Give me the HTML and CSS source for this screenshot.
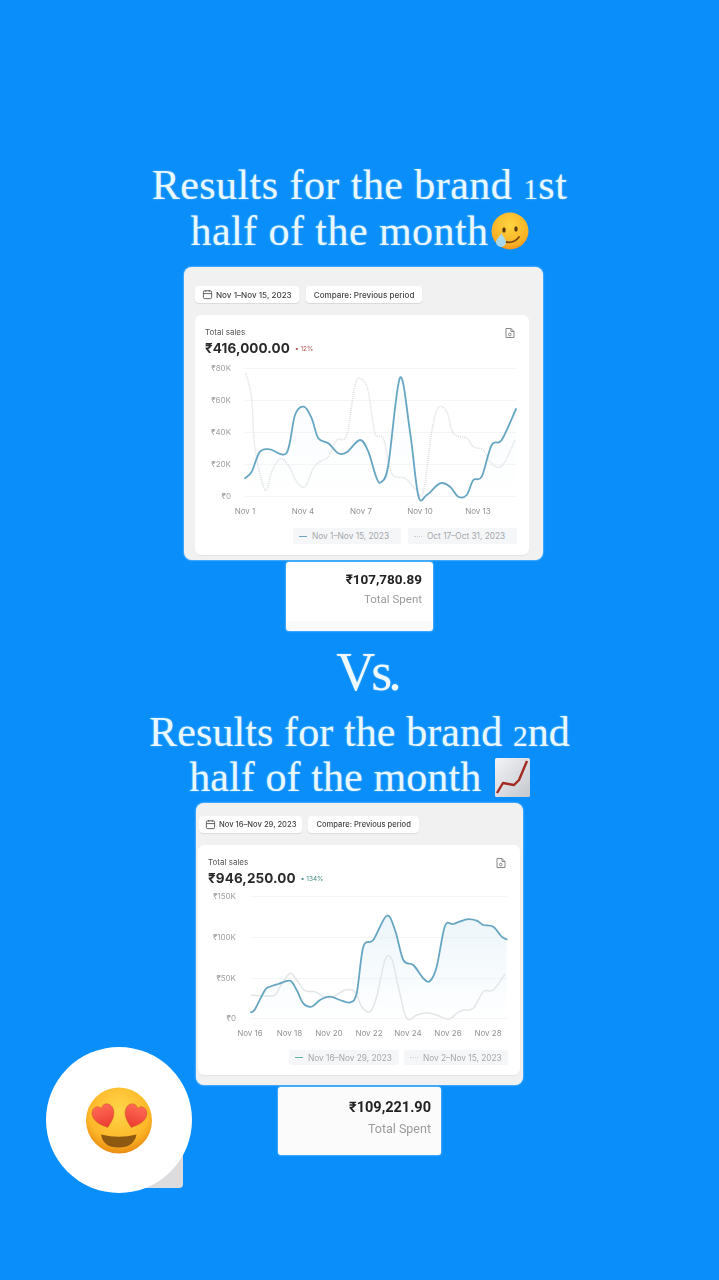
FILE: index.html
```html
<!DOCTYPE html>
<html lang="en">
<head>
<meta charset="utf-8">
<title>Results for the brand</title>
<link rel="stylesheet" href="styles.css">
</head>
<body>
<main class="story">
  <h1 class="headline headline-first">Results for the brand <span class="oldnum">1</span>st<br>half of the month<svg class="inline-emoji tear-emoji" viewBox="0 0 38 38"><defs><radialGradient id="faceA" cx="50%" cy="35%" r="70%"><stop offset="0" stop-color="#ffd540"/><stop offset=".75" stop-color="#fbb024"/><stop offset="1" stop-color="#ee8a14"/></radialGradient></defs><circle cx="19" cy="19" r="18.500" fill="url(#faceA)"/><ellipse cx="13" cy="18" rx="1.700" ry="2.800" fill="#5a3612"/><ellipse cx="25" cy="17" rx="1.700" ry="2.800" fill="#5a3612"/><path d="M15 30c5 1 10-1 13-5" fill="none" stroke="#7a4a14" stroke-width="1.800" stroke-linecap="round"/><path d="M10.500 21c1.500 4 4.500 6.500 4.500 9a5 5 0 0 1-10 0c0-2.500 3.500-5 5.500-9z" fill="#a8d8ec"/></svg></h1>

  <section class="card card-first">
    <div class="pills">
      <span class="pill pill-date"><svg class="cal" viewBox="0 0 12 12"><rect x="1.500" y="2" width="9" height="8.500" rx="1.500"/><path d="M1.500 5h9M4 1v2M8 1v2"/></svg>Nov 1–Nov 15, 2023</span>
      <span class="pill">Compare: Previous period</span>
    </div>
    <div class="panel">
      <div class="panel-head">
        <div>
          <div class="metric-label">Total sales</div>
          <div class="metric-row"><span class="metric-value">₹416,000.00</span><span class="delta delta-down">▪ 12%</span></div>
        </div>
        <svg class="doc" viewBox="0 0 10 12"><path d="M1 1.500h5l3 3v6H1z"/><path d="M6 1.500v3h3"/><circle cx="4.800" cy="7.500" r="1.300"/></svg>
      </div>
      <svg class="chart chart-first" viewBox="195 360 334 160">
        <defs><linearGradient id="areaA" x1="0" y1="0" x2="0" y2="1"><stop offset="0" stop-color="#e3eff5" stop-opacity=".25"/><stop offset="1" stop-color="#e3eff5" stop-opacity="0"/></linearGradient></defs>
        <g class="grid"><path d="M245 368.500H517M245 400.500H517M245 432.500H517M245 464.500H517M245 496.500H517"/></g>
        <g class="y-axis">
          <text x="231" y="371">₹80K</text><text x="231" y="403">₹60K</text><text x="231" y="435">₹40K</text><text x="231" y="467">₹20K</text><text x="231" y="499">₹0</text>
        </g>
        <g class="x-axis">
          <text x="245" y="514">Nov 1</text><text x="303" y="514">Nov 4</text><text x="361" y="514">Nov 7</text><text x="420" y="514">Nov 10</text><text x="478" y="514">Nov 13</text>
        </g>
        <path class="area" fill="url(#areaA)" data-base="496" data-ox="180" data-oy="265" data-points="195,640 215,620 240,560 270,553 320,563 345,450 372,425 395,460 415,520 445,535 475,565 500,562 540,525 565,560 590,640 605,650 625,600 660,338 690,500 715,692 740,690 780,655 810,665 835,695 860,690 880,645 905,635 935,540 965,525 1008,432"/>
        <path class="line-prev line-dotted" data-ox="180" data-oy="265" data-points="197,322 215,400 225,550 255,675 275,620 300,582 325,600 350,650 375,665 400,610 420,590 445,575 470,525 500,510 525,360 545,343 565,380 585,505 610,520 635,625 675,640 705,670 730,680 755,500 775,428 800,440 820,505 860,520 880,545 910,555 930,590 955,607 975,590 1005,525"/>
        <path class="line-now" data-ox="180" data-oy="265" data-points="195,640 215,620 240,560 270,553 320,563 345,450 372,425 395,460 415,520 445,535 475,565 500,562 540,525 565,560 590,640 605,650 625,600 660,338 690,500 715,692 740,690 780,655 810,665 835,695 860,690 880,645 905,635 935,540 965,525 1008,432"/>
      </svg>
      <div class="legend">
        <span class="chip chip-a"><i class="swatch"></i>Nov 1–Nov 15, 2023</span>
        <span class="chip chip-b"><i class="swatch swatch-prev"></i>Oct 17–Oct 31, 2023</span>
      </div>
    </div>
  </section>

  <section class="spent spent-first">
    <div class="spent-value">₹107,780.89</div>
    <div class="spent-label">Total Spent</div>
  </section>

  <div class="versus">Vs.</div>

  <h1 class="headline headline-second">Results for the brand <span class="oldnum">2</span>nd<br>half of the month <svg class="inline-emoji chart-emoji" viewBox="0 0 35 39"><defs><linearGradient id="tile" x1="0" y1="0" x2="1" y2="1"><stop offset="0" stop-color="#f2f3f6"/><stop offset="1" stop-color="#c4c8ce"/></linearGradient></defs><rect width="35" height="39" rx="1.500" fill="url(#tile)"/><path d="M2 35l6-10 11 2 5-5 8-19" fill="none" stroke="#a32a20" stroke-width="2.400" stroke-linejoin="round"/></svg></h1>

  <section class="card card-second">
    <div class="pills">
      <span class="pill pill-date"><svg class="cal" viewBox="0 0 12 12"><rect x="1.500" y="2" width="9" height="8.500" rx="1.500"/><path d="M1.500 5h9M4 1v2M8 1v2"/></svg>Nov 16–Nov 29, 2023</span>
      <span class="pill">Compare: Previous period</span>
    </div>
    <div class="panel">
      <div class="panel-head">
        <div>
          <div class="metric-label">Total sales</div>
          <div class="metric-row"><span class="metric-value">₹946,250.00</span><span class="delta delta-up">▪ 134%</span></div>
        </div>
        <svg class="doc" viewBox="0 0 10 12"><path d="M1 1.500h5l3 3v6H1z"/><path d="M6 1.500v3h3"/><circle cx="4.800" cy="7.500" r="1.300"/></svg>
      </div>
      <svg class="chart chart-second" viewBox="198 888 322 154">
        <defs><linearGradient id="areaB" x1="0" y1="0" x2="0" y2="1"><stop offset="0" stop-color="#d5e9f4" stop-opacity=".45"/><stop offset="1" stop-color="#d5e9f4" stop-opacity="0"/></linearGradient></defs>
        <g class="grid"><path d="M250 896.500H507M250 937.500H507M250 978.500H507M250 1018.500H507"/></g>
        <g class="y-axis">
          <text x="236" y="899">₹150K</text><text x="236" y="940">₹100K</text><text x="236" y="981">₹50K</text><text x="236" y="1021">₹0</text>
        </g>
        <g class="x-axis">
          <text x="250" y="1036">Nov 16</text><text x="289.500" y="1036">Nov 18</text><text x="329" y="1036">Nov 20</text><text x="369" y="1036">Nov 22</text><text x="408" y="1036">Nov 24</text><text x="448" y="1036">Nov 26</text><text x="488" y="1036">Nov 28</text>
        </g>
        <path class="area" fill="url(#areaB)" data-base="1018" data-ox="190" data-oy="800" data-points="183,637 195,628 225,570 240,560 265,552 300,542 320,570 340,610 365,620 390,600 420,590 450,600 480,607 500,580 520,440 550,420 590,347 615,390 640,480 670,495 700,535 720,543 740,500 765,378 790,372 830,358 860,362 880,375 910,380 935,410 950,418"/>
        <path class="line-prev" data-ox="190" data-oy="800" data-points="183,585 250,587 270,560 300,520 320,540 345,572 375,575 400,590 430,590 465,570 495,575 515,620 540,635 560,590 585,480 605,477 625,560 650,655 680,645 710,638 740,645 775,658 800,640 820,630 850,625 880,575 910,570 945,522"/>
        <path class="line-now" data-ox="190" data-oy="800" data-points="183,637 195,628 225,570 240,560 265,552 300,542 320,570 340,610 365,620 390,600 420,590 450,600 480,607 500,580 520,440 550,420 590,347 615,390 640,480 670,495 700,535 720,543 740,500 765,378 790,372 830,358 860,362 880,375 910,380 935,410 950,418"/>
      </svg>
      <div class="legend">
        <span class="chip chip-c"><i class="swatch swatch-teal"></i>Nov 16–Nov 29, 2023</span>
        <span class="chip chip-d"><i class="swatch swatch-prev"></i>Nov 2–Nov 15, 2023</span>
      </div>
    </div>
  </section>

  <section class="spent spent-second">
    <div class="spent-value">₹109,221.90</div>
    <div class="spent-label">Total Spent</div>
  </section>

  <svg class="bubble" viewBox="0 0 150 150">
    <defs>
      <radialGradient id="faceB" cx="50%" cy="35%" r="65%"><stop offset="0" stop-color="#ffd64a"/><stop offset=".72" stop-color="#fdb729"/><stop offset="1" stop-color="#e98c12"/></radialGradient>
      <linearGradient id="heart" x1="0" y1="0" x2="0" y2="1"><stop offset="0" stop-color="#ff6a55"/><stop offset="1" stop-color="#ea3b30"/></linearGradient>
      <path id="heartShape" d="M11 23C4 18 0 13 0 7.500 0 3 3 0 6.300 0 8.300 0 10 1 11 3 12 1 13.700 0 15.700 0 19 0 22 3 22 7.500 22 13 18 18 11 23Z"/>
    </defs>
    <path d="M137 104V137Q137 141 133 141H98Z" fill="#dcdcde"/>
    <circle cx="73" cy="73" r="73" fill="#fff"/>
    <circle cx="73" cy="73.500" r="33" fill="url(#faceB)"/>
    <path d="M55 87.500Q73 92 90.500 87.500Q88 100.500 72.500 100.500Q57 100.500 55 87.500Z" fill="#8e5a12"/>
    <use href="#heartShape" fill="url(#heart)" stroke="#c8601a" stroke-width=".7" stroke-opacity=".6" transform="translate(47 58) rotate(-18 11 11)"/>
    <use href="#heartShape" fill="url(#heart)" stroke="#c8601a" stroke-width=".7" stroke-opacity=".6" transform="translate(78 58) rotate(18 11 11)"/>
  </svg>
</main>
<script src="script.js"></script>
</body>
</html>
```
FILE: styles.css
```css
* { box-sizing: border-box; }
html, body { margin: 0; padding: 0; }
body { background: #0a8efa; width: 719px; height: 1280px; overflow: hidden; }

.story {
  position: relative;
  width: 719px;
  height: 1280px;
  padding-top: 162px;
  display: flex;
  flex-direction: column;
  align-items: center;
}

.headline {
  margin: 0;
  font-family: "Liberation Serif", "Times New Roman", serif;
  font-weight: 400;
  text-align: center;
  color: #e9f8ff;
  white-space: nowrap;
  text-shadow: 0 0 2px rgba(190, 235, 255, .55);
}
.headline-first { font-size: 42px; line-height: 46px; letter-spacing: .45px; }
.headline-second { font-size: 42px; line-height: 45px; letter-spacing: .1px; margin-top: 9px; }
.oldnum { font-size: .7em; line-height: 1; }
.inline-emoji { display: inline-block; margin-top: -14px; margin-bottom: -14px; }
.tear-emoji { width: 38px; height: 38px; margin-left: 2px; vertical-align: 9px; }
.chart-emoji { width: 35px; height: 39px; margin-left: 3px; vertical-align: 8px; }

.versus {
  margin: 12px 0 0 15px;
  font-family: "Liberation Serif", "Times New Roman", serif;
  font-size: 54px;
  line-height: 58px;
  letter-spacing: -4px;
  color: #edf9ff;
  text-shadow: 0 0 2px rgba(190, 235, 255, .5);
}

.card {
  background: #f1f1f1;
  border-radius: 8px;
  box-shadow: 0 0 2px rgba(220, 245, 255, .9);
  font-family: Inter, "Liberation Sans", sans-serif;
  filter: blur(.4px);
}
.card-first { width: 359px; height: 293px; margin: 13px 0 0 8px; padding: 19px 14px 5px 11px; }
.card-second { width: 327px; height: 282px; margin-top: 3px; padding: 13px 3px 9px 2px; }

.pills { display: flex; gap: 7px; height: 17px; font-size: 8.1px; font-weight: 500; color: #444; }
.card-second .pills { gap: 6px; padding-left: 1px; font-size: 7.6px; }
.pill {
  display: inline-flex;
  align-items: center;
  padding: 0 8px;
  background: #fff;
  border-radius: 4px;
  box-shadow: 0 1px 1px rgba(0, 0, 0, .1);
  white-space: nowrap;
}
.pill-date { padding: 0 7px; gap: 3px; }
.card-second .pill-date { padding: 0 6px; }
.cal { width: 11px; height: 11px; fill: none; stroke: #555; stroke-width: 1; }

.panel { background: #fff; border-radius: 6px; box-shadow: 0 1px 1px rgba(0, 0, 0, .06); }
.card-first .panel { height: 240px; margin-top: 12px; }
.card-second .panel { height: 230px; margin-top: 12px; }

.panel-head { display: flex; justify-content: space-between; align-items: flex-start; height: 45px; padding: 12px 14px 0 10px; }
.card-second .panel-head { height: 43px; }
.metric-label { font-size: 8px; line-height: 10px; color: #555; }
.metric-row { display: flex; align-items: center; gap: 5px; margin-top: 3px; }
.metric-value { font-size: 13.5px; line-height: 17px; font-weight: 700; color: #2a2a2a; letter-spacing: .1px; }
.delta { font-size: 6.5px; }
.delta-down { color: #b5544a; }
.delta-up { color: #3d8a80; }
.doc { width: 10px; height: 12px; fill: none; stroke: #888; stroke-width: 1; }

.chart { display: block; overflow: visible; }
.chart-first { width: 334px; height: 160px; }
.chart-second { width: 322px; height: 154px; }
.grid path { stroke: #f5f5f5; stroke-width: 1; fill: none; }
.y-axis text { font-size: 8px; fill: #a0a0a0; text-anchor: end; }
.x-axis text { font-size: 8px; fill: #929292; text-anchor: middle; }
.line-now { fill: none; stroke: #66a6c2; stroke-width: 1.8; stroke-linecap: round; }
.line-prev { fill: none; stroke: #e3e6e8; stroke-width: 1.5; }
.line-dotted { stroke-dasharray: 1 1; stroke: #d6dcdf; }

.legend { display: flex; justify-content: flex-end; gap: 7px; padding-right: 12px; margin-top: 8px; }
.card-second .legend { gap: 5px; margin-top: 8px; }
.chip {
  display: inline-flex;
  align-items: center;
  gap: 5px;
  height: 16px;
  padding: 0 6px;
  background: #f5f6f7;
  border-radius: 2px;
  font-size: 8.3px;
  color: #a3a8ac;
  white-space: nowrap;
}
.chip-a { width: 108px; }
.chip-b { width: 109px; }
.chip-c { width: 110px; height: 15px; }
.chip-d { width: 104px; height: 15px; }
.swatch { width: 8px; height: 0; border-top: 1.2px solid #6ba5c4; flex: none; }
.swatch-prev { border-top: 1.2px dotted #ccd1d4; }
.swatch-teal { border-top-color: #5fb0ad; }

.spent {
  background: linear-gradient(#fff 85%, #fafafa 85%);
  border-radius: 3px;
  box-shadow: 0 0 2px rgba(220, 245, 255, .9);
  font-family: Roboto, "Liberation Sans", sans-serif;
  text-align: right;
  filter: blur(.3px);
}
.spent-first { width: 147px; height: 69px; margin-top: 2px; padding: 9px 11px 0 0; }
.spent-second { width: 163px; height: 68px; margin-top: 2px; padding: 12px 10px 0 0; background: #fbfbfb; }
.spent-value { font-weight: 700; color: #222; }
.spent-label { color: #9b9b9b; }
.spent-first .spent-value { font-size: 13.5px; line-height: 16px; }
.spent-first .spent-label { font-size: 11.5px; line-height: 14px; margin-top: 5px; }
.spent-second .spent-value { font-size: 14.5px; line-height: 18px; }
.spent-second .spent-label { font-size: 12.5px; line-height: 15px; margin-top: 4px; }

.bubble { position: absolute; left: 46px; top: 1047px; width: 150px; height: 150px; }
```
FILE: script.js
```js
// Turns each chart series (sampled points, with a page offset) into a smooth path.
function smooth(pts) {
  var d = "M" + pts[0][0] + " " + pts[0][1];
  for (var i = 0; i < pts.length - 1; i++) {
    var p0 = pts[i - 1] || pts[i], p1 = pts[i], p2 = pts[i + 1], p3 = pts[i + 2] || p2;
    var c1x = p1[0] + (p2[0] - p0[0]) / 6, c1y = p1[1] + (p2[1] - p0[1]) / 6;
    var c2x = p2[0] - (p3[0] - p1[0]) / 6, c2y = p2[1] - (p3[1] - p1[1]) / 6;
    d += "C" + c1x.toFixed(1) + " " + c1y.toFixed(1) + " " + c2x.toFixed(1) + " " + c2y.toFixed(1) + " " + p2[0].toFixed(1) + " " + p2[1].toFixed(1);
  }
  return d;
}
document.querySelectorAll("path[data-points]").forEach(function (el) {
  var ox = +el.dataset.ox, oy = +el.dataset.oy;
  var pts = el.dataset.points.split(" ").map(function (s) {
    var a = s.split(",");
    return [ox + a[0] / 3, oy + a[1] / 3];
  });
  var d = smooth(pts);
  if (el.dataset.base) {
    d += "L" + pts[pts.length - 1][0].toFixed(1) + " " + el.dataset.base + "L" + pts[0][0].toFixed(1) + " " + el.dataset.base + "Z";
  }
  el.setAttribute("d", d);
});
```
